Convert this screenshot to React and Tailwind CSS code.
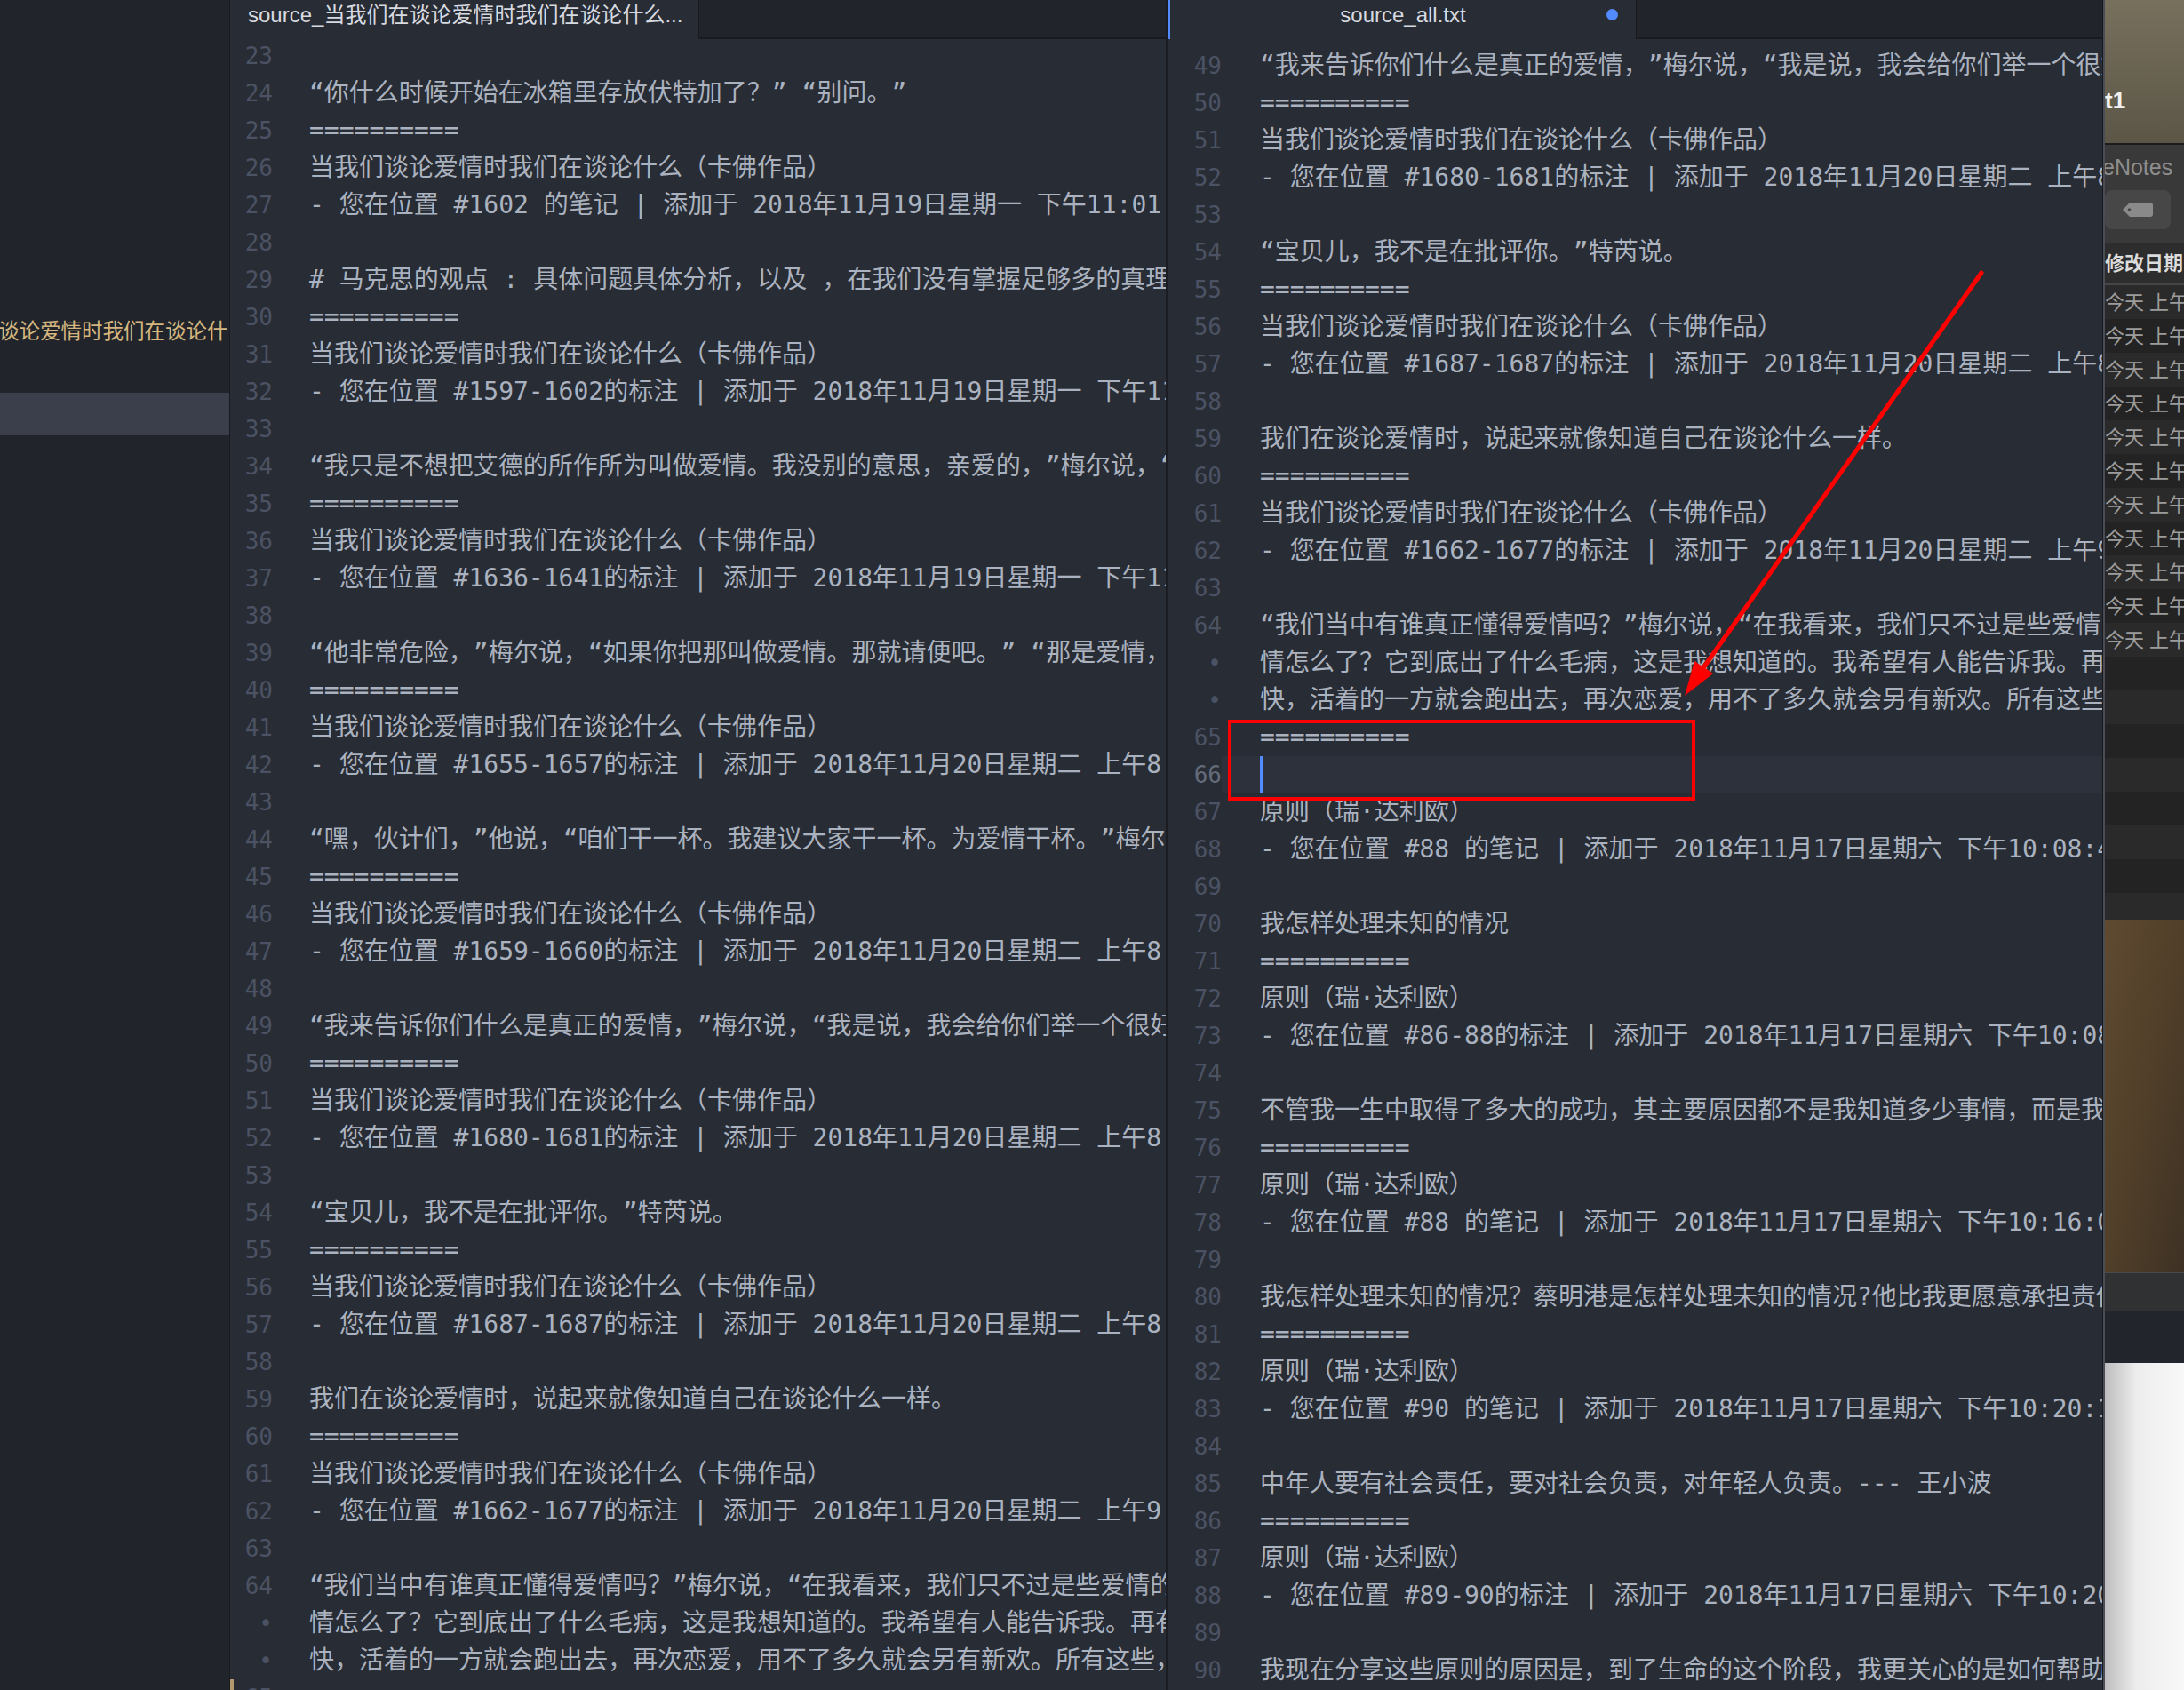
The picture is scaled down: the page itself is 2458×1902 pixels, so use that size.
import React from 'react';

const leftRows = [
  { n: 23, t: '' },
  { n: 24, t: '“你什么时候开始在冰箱里存放伏特加了？” “别问。”' },
  { n: 25, t: '==========' },
  { n: 26, t: '当我们谈论爱情时我们在谈论什么（卡佛作品）' },
  { n: 27, t: '- 您在位置 #1602 的笔记 | 添加于 2018年11月19日星期一 下午11:01:35' },
  { n: 28, t: '' },
  { n: 29, t: '# 马克思的观点 : 具体问题具体分析，以及 ，在我们没有掌握足够多的真理之前' },
  { n: 30, t: '==========' },
  { n: 31, t: '当我们谈论爱情时我们在谈论什么（卡佛作品）' },
  { n: 32, t: '- 您在位置 #1597-1602的标注 | 添加于 2018年11月19日星期一 下午11:01:17' },
  { n: 33, t: '' },
  { n: 34, t: '“我只是不想把艾德的所作所为叫做爱情。我没别的意思，亲爱的，”梅尔说，“' },
  { n: 35, t: '==========' },
  { n: 36, t: '当我们谈论爱情时我们在谈论什么（卡佛作品）' },
  { n: 37, t: '- 您在位置 #1636-1641的标注 | 添加于 2018年11月19日星期一 下午11:12:40' },
  { n: 38, t: '' },
  { n: 39, t: '“他非常危险，”梅尔说，“如果你把那叫做爱情。那就请便吧。” “那是爱情，”特芮说' },
  { n: 40, t: '==========' },
  { n: 41, t: '当我们谈论爱情时我们在谈论什么（卡佛作品）' },
  { n: 42, t: '- 您在位置 #1655-1657的标注 | 添加于 2018年11月20日星期二 上午8:02:11' },
  { n: 43, t: '' },
  { n: 44, t: '“嘿，伙计们，”他说，“咱们干一杯。我建议大家干一杯。为爱情干杯。”梅尔说' },
  { n: 45, t: '==========' },
  { n: 46, t: '当我们谈论爱情时我们在谈论什么（卡佛作品）' },
  { n: 47, t: '- 您在位置 #1659-1660的标注 | 添加于 2018年11月20日星期二 上午8:03:27' },
  { n: 48, t: '' },
  { n: 49, t: '“我来告诉你们什么是真正的爱情，”梅尔说，“我是说，我会给你们举一个很好的例子。' },
  { n: 50, t: '==========' },
  { n: 51, t: '当我们谈论爱情时我们在谈论什么（卡佛作品）' },
  { n: 52, t: '- 您在位置 #1680-1681的标注 | 添加于 2018年11月20日星期二 上午8:10:05' },
  { n: 53, t: '' },
  { n: 54, t: '“宝贝儿，我不是在批评你。”特芮说。' },
  { n: 55, t: '==========' },
  { n: 56, t: '当我们谈论爱情时我们在谈论什么（卡佛作品）' },
  { n: 57, t: '- 您在位置 #1687-1687的标注 | 添加于 2018年11月20日星期二 上午8:12:44' },
  { n: 58, t: '' },
  { n: 59, t: '我们在谈论爱情时，说起来就像知道自己在谈论什么一样。' },
  { n: 60, t: '==========' },
  { n: 61, t: '当我们谈论爱情时我们在谈论什么（卡佛作品）' },
  { n: 62, t: '- 您在位置 #1662-1677的标注 | 添加于 2018年11月20日星期二 上午9:01:36' },
  { n: 63, t: '' },
  { n: 64, t: '“我们当中有谁真正懂得爱情吗？”梅尔说，“在我看来，我们只不过是些爱情的新手。我们说我们彼此相爱' },
  { wrap: true, t: '情怎么了？它到底出了什么毛病，这是我想知道的。我希望有人能告诉我。再有，如果' },
  { wrap: true, t: '快，活着的一方就会跑出去，再次恋爱，用不了多久就会另有新欢。所有这些，所有这种' },
  { n: 65, t: '==========', marker: true },
];

const rightRows = [
  { n: 49, t: '“我来告诉你们什么是真正的爱情，”梅尔说，“我是说，我会给你们举一个很好的例子。' },
  { n: 50, t: '==========' },
  { n: 51, t: '当我们谈论爱情时我们在谈论什么（卡佛作品）' },
  { n: 52, t: '- 您在位置 #1680-1681的标注 | 添加于 2018年11月20日星期二 上午8:10:05' },
  { n: 53, t: '' },
  { n: 54, t: '“宝贝儿，我不是在批评你。”特芮说。' },
  { n: 55, t: '==========' },
  { n: 56, t: '当我们谈论爱情时我们在谈论什么（卡佛作品）' },
  { n: 57, t: '- 您在位置 #1687-1687的标注 | 添加于 2018年11月20日星期二 上午8:12:44' },
  { n: 58, t: '' },
  { n: 59, t: '我们在谈论爱情时，说起来就像知道自己在谈论什么一样。' },
  { n: 60, t: '==========' },
  { n: 61, t: '当我们谈论爱情时我们在谈论什么（卡佛作品）' },
  { n: 62, t: '- 您在位置 #1662-1677的标注 | 添加于 2018年11月20日星期二 上午9:01:36' },
  { n: 63, t: '' },
  { n: 64, t: '“我们当中有谁真正懂得爱情吗？”梅尔说，“在我看来，我们只不过是些爱情的新手。我们说我们彼此相爱' },
  { wrap: true, t: '情怎么了？它到底出了什么毛病，这是我想知道的。我希望有人能告诉我。再有，如果' },
  { wrap: true, t: '快，活着的一方就会跑出去，再次恋爱，用不了多久就会另有新欢。所有这些，所有这种' },
  { n: 65, t: '==========' },
  { n: 66, t: '', active: true },
  { n: 67, t: '原则（瑞·达利欧）' },
  { n: 68, t: '- 您在位置 #88 的笔记 | 添加于 2018年11月17日星期六 下午10:08:44' },
  { n: 69, t: '' },
  { n: 70, t: '我怎样处理未知的情况' },
  { n: 71, t: '==========' },
  { n: 72, t: '原则（瑞·达利欧）' },
  { n: 73, t: '- 您在位置 #86-88的标注 | 添加于 2018年11月17日星期六 下午10:08:44' },
  { n: 74, t: '' },
  { n: 75, t: '不管我一生中取得了多大的成功，其主要原因都不是我知道多少事情，而是我知道在无知的情况下自己应该怎么做。' },
  { n: 76, t: '==========' },
  { n: 77, t: '原则（瑞·达利欧）' },
  { n: 78, t: '- 您在位置 #88 的笔记 | 添加于 2018年11月17日星期六 下午10:16:04' },
  { n: 79, t: '' },
  { n: 80, t: '我怎样处理未知的情况？蔡明港是怎样处理未知的情况?他比我更愿意承担责任' },
  { n: 81, t: '==========' },
  { n: 82, t: '原则（瑞·达利欧）' },
  { n: 83, t: '- 您在位置 #90 的笔记 | 添加于 2018年11月17日星期六 下午10:20:12' },
  { n: 84, t: '' },
  { n: 85, t: '中年人要有社会责任，要对社会负责，对年轻人负责。--- 王小波' },
  { n: 86, t: '==========' },
  { n: 87, t: '原则（瑞·达利欧）' },
  { n: 88, t: '- 您在位置 #89-90的标注 | 添加于 2018年11月17日星期六 下午10:20:12' },
  { n: 89, t: '' },
  { n: 90, t: '我现在分享这些原则的原因是，到了生命的这个阶段，我更关心的是如何帮助他人获得成功' },
];

function CodeRow({ row, gutterClass, textClass }) {
  return (
    <div className="flex h-[42px] leading-[42px]">
      <div
        className={`${gutterClass} shrink-0 text-right text-[26px] ${row.active ? 'text-[#636b7a]' : 'text-[#4b5263]'} ${row.marker ? 'border-l-[4px] border-[#b19b6e]' : ''}`}
      >
        {row.wrap ? '•' : row.n}
      </div>
      <div
        className={`${textClass} min-w-0 flex-1 overflow-hidden whitespace-pre text-[28px] text-[#abb2bf] ${row.active ? 'bg-[#2c313c]' : ''}`}
      >
        {row.active ? <span className="inline-block h-[42px] w-[4px] bg-[#528bff] align-top" /> : row.t}
      </div>
    </div>
  );
}

function TagIcon() {
  return (
    <svg width="36" height="18" viewBox="0 0 36 18">
      <path d="M9 1 H32 a3 3 0 0 1 3 3 V14 a3 3 0 0 1 -3 3 H9 L1 9 Z" fill="#8a8a8a" />
      <circle cx="8.5" cy="9" r="1.8" fill="#474747" />
    </svg>
  );
}

export default function App() {
  // full-width punctuation must keep its full advance, as in the editor
  const mono = "font-['DejaVu_Sans_Mono','Noto_Sans_CJK_SC',monospace] [text-spacing-trim:space-all]";
  const stripRows = Array.from({ length: 19 }, (_, i) => i);

  return (
    <div className="relative h-[1902px] w-[2458px] overflow-hidden bg-[#282c34]">
      <div className="flex h-full">
        {/* tree view */}
        <aside className="flex w-[259px] shrink-0 flex-col border-r border-[#181a1f] bg-[#21252b] pt-[350px] font-['Noto_Sans_CJK_SC',sans-serif]">
          <div className="flex h-[44px] items-center overflow-hidden whitespace-nowrap text-[23.5px] text-[#d5b67f]">
            <span className="-ml-[2px]">谈论爱情时我们在谈论什么</span>
          </div>
          <div className="mt-[48px] h-[48px] bg-[#3a3f4b]" />
        </aside>

        {/* left pane */}
        <section className="flex w-[1055px] shrink-0 flex-col border-r-[2px] border-[#1b1d23]">
          <div className="flex h-[44px] shrink-0 bg-[#21252b] font-['Liberation_Sans','Noto_Sans_CJK_SC',sans-serif]">
            <div className="w-[528px] overflow-hidden whitespace-nowrap border-r border-[#181a1f] bg-[#282c34] pl-[20px] pt-[2px] text-[24px] leading-[30px] text-[#d7dae0]">
              source_当我们在谈论爱情时我们在谈论什么...
            </div>
            <div className="flex-1 border-b-[2px] border-[#181a1f]" />
          </div>
          <div className={`-mt-[2px] ${mono}`}>
            {leftRows.map((row, i) => (
              <CodeRow key={i} row={row} gutterClass="w-[48px]" textClass="pl-[41px]" />
            ))}
          </div>
        </section>

        {/* right pane */}
        <section className="flex w-[1052px] shrink-0 flex-col">
          <div className="flex h-[44px] shrink-0 bg-[#21252b] font-['Liberation_Sans','Noto_Sans_CJK_SC',sans-serif]">
            <div className="relative w-[528px] whitespace-nowrap border-l-[3px] border-r border-l-[#528bff] border-r-[#181a1f] bg-[#282c34] pt-[2px] text-center text-[24px] leading-[30px] text-[#d7dae0]">
              source_all.txt
              <span className="absolute left-[491px] top-[10px] h-[13px] w-[13px] rounded-full bg-[#528bff]" />
            </div>
            <div className="flex-1 border-b-[2px] border-[#181a1f]" />
          </div>
          <div className={`pt-[9px] ${mono}`}>
            {rightRows.map((row, i) => (
              <CodeRow key={i} row={row} gutterClass="w-[61px]" textClass="pl-[43px]" />
            ))}
          </div>
        </section>

        <div className="w-[3px] shrink-0 border-l border-[#181a1f] bg-[#4a4d54]" />

        {/* neighbouring window */}
        <div className="flex w-[89px] shrink-0 flex-col overflow-hidden font-['Liberation_Sans','Noto_Sans_CJK_SC',sans-serif]">
          <div className="flex h-[161px] flex-col justify-end bg-gradient-to-b from-[#77705d] to-[#5c5647] pb-[33px]">
            <span className="text-[26px] font-bold leading-[30px] text-[#f2f2f2]">t1</span>
          </div>
          <div className="h-[2px] bg-[#1c1c1c]" />
          <div className="flex h-[110px] flex-col bg-[#393939] pt-[12px]">
            <span className="-ml-[3px] whitespace-nowrap text-[25px] leading-[26px] text-[#8e8e8e]">eNotes</span>
            <div className="mt-[13px] flex h-[44px] w-[74px] items-center justify-center rounded-[8px] bg-[#474747]">
              <TagIcon />
            </div>
          </div>
          <div className="h-px bg-[#1b1b1b]" />
          <div className="flex h-[45px] items-center whitespace-nowrap bg-[#2d2d2d] text-[22px] font-bold text-[#dcdcdc]">
            修改日期
          </div>
          <div className="h-[2px] bg-[#454545]" />
          <div className="h-[714px] overflow-hidden">
            {stripRows.map((i) => (
              <div
                key={i}
                className={`flex h-[38px] items-center whitespace-nowrap text-[22px] text-[#9c9c9c] ${i % 2 === 0 ? 'bg-[#2a2a2a]' : 'bg-[#232323]'}`}
              >
                {i < 11 ? '今天 上午' : ''}
              </div>
            ))}
          </div>
          <div className="h-[397px] bg-gradient-to-br from-[#5f4a31] via-[#513f29] to-[#3e3124]" />
          <div className="h-[43px] border-t border-[#4a4a4a] bg-[#303133]" />
          <div className="h-[59px] bg-[#22252b]" />
          <div className="flex-1 bg-gradient-to-r from-[#bdbdbd] via-[#ededed] via-40% to-[#f8f8f8]" />
        </div>
      </div>

      {/* annotation overlay */}
      <div className="pointer-events-none absolute left-[1382px] top-[810px] h-[91px] w-[526px] border-[4px] border-[#ff0000]" />
      <svg className="pointer-events-none absolute left-0 top-0" width="2458" height="1902">
        <line x1="2230" y1="307" x2="1916" y2="753" stroke="#ff0000" strokeWidth="5" strokeLinecap="round" />
        <polygon points="1896,783 1928,758 1907,744" fill="#ff0000" />
      </svg>
    </div>
  );
}
